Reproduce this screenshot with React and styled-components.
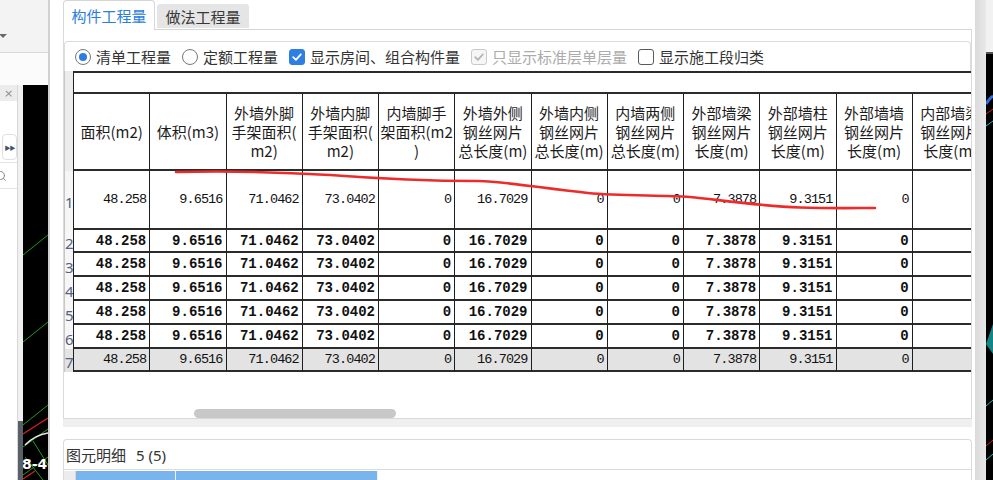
import React from 'react'
import styled, { createGlobalStyle } from 'styled-components'
import { Search } from 'lucide-react'

const GlobalStyle = createGlobalStyle`
  html, body { margin: 0; padding: 0; background: #f3f3f3; }
  body { font-family: "Noto Sans CJK SC", "Noto Sans", sans-serif; overflow: hidden; }
`

const COL_W = 76.25

const columns = [
  ['面积(m2)'],
  ['体积(m3)'],
  ['外墙外脚', '手架面积(', 'm2)'],
  ['外墙内脚', '手架面积(', 'm2)'],
  ['内墙脚手', '架面积(m2', ')'],
  ['外墙外侧', '钢丝网片', '总长度(m)'],
  ['外墙内侧', '钢丝网片', '总长度(m)'],
  ['内墙两侧', '钢丝网片', '总长度(m)'],
  ['外部墙梁', '钢丝网片', '长度(m)'],
  ['外部墙柱', '钢丝网片', '长度(m)'],
  ['外部墙墙', '钢丝网片', '长度(m)'],
  ['内部墙梁', '钢丝网片', '长度(m)'],
]

const values = ['48.258', '9.6516', '71.0462', '73.0402', '0', '16.7029', '0', '0', '7.3878', '9.3151', '0', '']

const rows = [
  { n: 1, h: 59, bold: false },
  { n: 2, h: 23, bold: true },
  { n: 3, h: 24, bold: true },
  { n: 4, h: 24, bold: true },
  { n: 5, h: 24, bold: true },
  { n: 6, h: 24, bold: true },
  { n: 7, h: 23, bold: false, shaded: true },
]

const Page = styled.div`
  position: relative;
  display: flex;
  width: 993px;
  height: 480px;
  overflow: hidden;
  background: #f3f3f3;
`

/* background application on the left */
const Backdrop = styled.div`
  width: 48px;
  flex: none;
  display: flex;
  flex-direction: column;
`
const TopStrip = styled.div`
  height: 53px;
  box-sizing: border-box;
  padding-top: 34px;
  background: #f3f3f3;
  border-bottom: 1px solid #d9d9d9;
`
const Caret = styled.div`
  width: 0;
  height: 0;
  margin-left: -1px;
  border-left: 4px solid transparent;
  border-right: 4px solid transparent;
  border-top: 4px solid #6a6a6a;
`
const TopGap = styled.div`
  height: 32px;
  background: #fbfbfb;
`
const Workspace = styled.div`
  flex: 1;
  display: flex;
  min-height: 0;
`
const SidePanel = styled.div`
  width: 18px;
  flex: none;
  box-sizing: border-box;
  border-right: 1px solid #d8d8d8;
  background: #fff;
  display: flex;
  flex-direction: column;
  overflow: hidden;
`
const PanelHead = styled.div`
  height: 16px;
  background: #ececec;
  display: flex;
  align-items: center;
  padding-left: 4px;
  font-family: "DejaVu Sans", sans-serif;
  font-size: 11px;
  color: #8c8c8c;
`
const MiniButton = styled.div`
  margin: 33px 0 0 2px;
  width: 15px;
  height: 26px;
  box-sizing: border-box;
  border: 1px solid #e0e0e0;
  border-radius: 4px;
  display: flex;
  align-items: center;
  justify-content: center;
  font-size: 6px;
  letter-spacing: -1px;
  color: #41506b;
`
const PanelRule = styled.div`
  margin-top: 2px;
  border-top: 1px solid #e4e4e4;
`
const SearchRow = styled.div`
  height: 25px;
  display: flex;
  align-items: center;
  margin-left: -5px;
  color: #8a8a8a;
  border-bottom: 1px solid #e4e4e4;
`
const Splitter = styled.div`
  width: 5px;
  flex: none;
  display: flex;
  flex-direction: column;
`
const SplitLight = styled.div`
  flex: 1;
  background: #f0f0f0;
`
const SplitDark = styled.div`
  height: 59px;
  background: #5a6068;
`
const Canvas = styled.div`
  flex: 1;
  background: #000;
  overflow: hidden;
  svg { display: block; }
`

/* dialog */
const Dialog = styled.div`
  width: 927px;
  flex: none;
  box-sizing: border-box;
  border-left: 2px solid #d2d2d2;
  background: #fff;
  padding: 0 3px 0 13px;
  display: flex;
  flex-direction: column;
`
const TabBar = styled.div`
  height: 31px;
  display: flex;
  align-items: flex-end;
`
const ActiveTab = styled.div`
  width: 92px;
  height: 30px;
  box-sizing: border-box;
  border: 1px solid #d6d6d6;
  border-bottom: none;
  border-radius: 4px 4px 0 0;
  display: flex;
  align-items: center;
  justify-content: center;
  font-size: 15px;
  color: #2b7ddb;
`
const TabRest = styled.div`
  flex: 1;
  align-self: stretch;
  display: flex;
  align-items: flex-end;
  padding-left: 2px;
  border-bottom: 1px solid #d6d6d6;
`
const Tab = styled.div`
  width: 92px;
  height: 24px;
  margin-bottom: 1px;
  border-radius: 3px 3px 0 0;
  background: #e5e5e5;
  display: flex;
  align-items: center;
  justify-content: center;
  font-size: 15px;
  color: #383838;
`
const ContentPanel = styled.div`
  height: 392px;
  box-sizing: border-box;
  border: 1px solid #d9d9d9;
  border-top: none;
  display: flex;
  flex-direction: column;
`
const OptionsBar = styled.div`
  margin-top: 11px;
  height: 30px;
  box-sizing: border-box;
  border: 1px solid #dcdcdc;
  border-bottom: none;
  border-radius: 4px 4px 0 0;
  display: flex;
  align-items: center;
  padding-left: 10px;
  font-size: 15px;
`
const Option = styled.div`
  display: flex;
  align-items: center;
  margin-right: 11px;
  color: ${p => (p.$disabled ? '#ababab' : '#333')};
  white-space: nowrap;
`
const Radio = styled.span`
  width: 16px;
  height: 16px;
  flex: none;
  box-sizing: border-box;
  border-radius: 50%;
  border: 1px solid #777;
  margin-right: 5px;
  display: flex;
  align-items: center;
  justify-content: center;
  &::after {
    content: '';
    width: 8px;
    height: 8px;
    border-radius: 50%;
    background: ${p => (p.$on ? '#2a7de1' : 'transparent')};
  }
`
const tone = {
  on: { border: '#2d7fe3', bg: '#2d7fe3', mark: '#fff' },
  dim: { border: '#c9c9c9', bg: '#f6f6f6', mark: '#b5b5b5' },
  off: { border: '#5a5a5a', bg: '#fff', mark: 'none' },
}
const CheckBox = styled.span`
  width: 16px;
  height: 16px;
  flex: none;
  box-sizing: border-box;
  border-radius: 3px;
  border: 1px solid ${p => tone[p.$tone].border};
  background: ${p => tone[p.$tone].bg};
  margin-right: 5px;
  display: flex;
  align-items: center;
  justify-content: center;
`

const GridViewport = styled.div`
  width: 907px;
  height: 301px;
  overflow: hidden;
`
const Row = styled.div`
  display: grid;
  grid-template-columns: 10px repeat(12, ${COL_W}px);
  height: ${p => p.$h}px;
`
const RowHead = styled.div`
  box-sizing: border-box;
  border-left: 1px solid #c6c6c6;
  border-right: 1px solid #222;
  background: ${p => (p.$shaded ? '#e3e3e3' : p.$head ? '#ececec' : '#f6f6f6')};
  display: flex;
  align-items: center;
  padding-top: 3px;
  overflow: hidden;
  font-family: "Noto Sans", sans-serif;
  font-size: 15px;
  color: #52627f;
`
const BandCell = styled.div`
  grid-column: 2 / -1;
  border-top: 2px solid #2b2b2b;
  border-bottom: 2px solid #2b2b2b;
  background: #fff;
`
const HeadCell = styled.div`
  box-sizing: border-box;
  border-right: 1px solid #1e1e1e;
  border-bottom: 2px solid #2b2b2b;
  display: flex;
  flex-direction: column;
  align-items: center;
  justify-content: center;
  font-size: 15px;
  line-height: 19px;
  color: #1c1c1c;
  white-space: nowrap;
  overflow: hidden;
`
const DataCell = styled.div`
  box-sizing: border-box;
  border-right: 1px solid #1e1e1e;
  border-bottom: 2px solid #2b2b2b;
  background: ${p => (p.$shaded ? '#e3e3e3' : '#fff')};
  display: flex;
  align-items: center;
  justify-content: flex-end;
  padding-right: 3px;
  font-family: "Liberation Mono", "DejaVu Sans Mono", monospace;
  font-size: ${p => (p.$bold ? '14px' : '13.5px')};
  font-weight: ${p => (p.$bold ? 700 : 400)};
  letter-spacing: ${p => (p.$bold ? '0px' : '-0.9px')};
  color: #111;
  white-space: nowrap;
  overflow: hidden;
`
const ScrollArea = styled.div`
  flex: 1;
`
const ScrollThumb = styled.div`
  margin: 37px 0 0 130px;
  width: 202px;
  height: 9px;
  border-radius: 5px;
  background: #c8c8c8;
`
const Band = styled.div`
  height: 8px;
  flex: none;
  background: #efefef;
`
const DetailPanel = styled.div`
  margin-top: 12px;
  flex: 1;
  border: 1px solid #dadada;
  border-bottom: none;
  border-radius: 4px 4px 0 0;
`
const DetailHead = styled.div`
  height: 29px;
  border-bottom: 1px solid #dcdcdc;
  display: flex;
  align-items: center;
  padding-left: 2px;
  font-size: 15px;
  color: #333;
`
const Count = styled.span`
  margin-left: 10px;
  font-family: "Noto Sans", sans-serif;
`
const DetailColumns = styled.div`
  margin-top: 1px;
  display: grid;
  grid-template-columns: 12px 100px 202px;
  height: 10px;
`
const DetailCell = styled.div`
  background: ${p => (p.$blue ? '#7ab4ec' : '#ececec')};
  border-right: 1px solid ${p => (p.$blue ? '#e8f2fc' : '#d8d8d8')};
`

/* right edge */
const RightEdge = styled.div`
  flex: 1;
  display: flex;
`
const FrameShade = styled.div`
  width: 11px;
  background: linear-gradient(to right, #dadada, #e8e8e8);
`
const RightApp = styled.div`
  flex: 1;
  display: flex;
  flex-direction: column;
`
const RightTop = styled.div`
  height: 52px;
  background: #f2f2f2;
  border-bottom: 2px solid #555;
`
const RightCanvas = styled.div`
  flex: 1;
  background: #000;
  overflow: hidden;
  svg { display: block; }
`
const Annotation = styled.svg`
  position: absolute;
  left: 0;
  top: 0;
  pointer-events: none;
`

const Mark = ({ color }) => (
  <svg width="12" height="12" viewBox="0 0 12 12">
    <path d="M2.2 6.2 L4.9 8.8 L9.8 3.3" fill="none" stroke={color} strokeWidth="1.8" strokeLinecap="round" strokeLinejoin="round" />
  </svg>
)

const Check = ({ t, children }) => (
  <Option $disabled={t === 'dim'}>
    <CheckBox $tone={t}>{t !== 'off' && <Mark color={tone[t].mark} />}</CheckBox>
    {children}
  </Option>
)

export default function App() {
  return (
    <Page>
      <GlobalStyle />
      <Backdrop>
        <TopStrip><Caret /></TopStrip>
        <TopGap />
        <Workspace>
          <SidePanel>
            <PanelHead>×</PanelHead>
            <MiniButton>▶▶</MiniButton>
            <PanelRule />
            <SearchRow><Search size={12} strokeWidth={2} /></SearchRow>
          </SidePanel>
          <Splitter><SplitLight /><SplitDark /></Splitter>
          <Canvas>
            <svg width="25" height="395" viewBox="0 0 25 395">
              <g stroke="#1f9a1f" strokeWidth="1" fill="none">
                <path d="M0 170 L25 150" />
                <path d="M0 257 L25 237" />
                <path d="M0 340 L25 320" />
                <path d="M0 362 L25 344" />
                <path d="M2 372 L20 395" />
                <path d="M0 390 L25 372" />
                <path d="M10 356 L25 380" />
              </g>
              <g stroke="#d42020" strokeWidth="1.2" fill="none">
                <path d="M0 349 L25 333" />
                <path d="M0 394 L12 386" />
              </g>
              <path d="M2 360 Q12 350 25 348" stroke="#e8e8e8" strokeWidth="1.5" fill="none" />
              <text x="-1" y="384" fill="#fff" fontFamily="DejaVu Sans" fontWeight="700" fontSize="14">8-4</text>
            </svg>
          </Canvas>
        </Workspace>
      </Backdrop>

      <Dialog>
        <TabBar>
          <ActiveTab>构件工程量</ActiveTab>
          <TabRest><Tab>做法工程量</Tab></TabRest>
        </TabBar>
        <ContentPanel>
          <OptionsBar>
            <Option><Radio $on />清单工程量</Option>
            <Option><Radio />定额工程量</Option>
            <Check t="on">显示房间、组合构件量</Check>
            <Check t="dim">只显示标准层单层量</Check>
            <Check t="off">显示施工段归类</Check>
          </OptionsBar>
          <GridViewport>
            <Row $h={23}>
              <RowHead $head />
              <BandCell />
            </Row>
            <Row $h={77}>
              <RowHead $head />
              {columns.map((lines, i) => (
                <HeadCell key={i}>
                  {lines.map(l => <span key={l}>{l}</span>)}
                </HeadCell>
              ))}
            </Row>
            {rows.map(r => (
              <Row key={r.n} $h={r.h}>
                <RowHead $shaded={r.shaded}>{r.n}</RowHead>
                {values.map((v, i) => (
                  <DataCell key={i} $bold={r.bold} $shaded={r.shaded}>{v}</DataCell>
                ))}
              </Row>
            ))}
          </GridViewport>
          <ScrollArea><ScrollThumb /></ScrollArea>
        </ContentPanel>
        <Band />
        <DetailPanel>
          <DetailHead>图元明细<Count>5 (5)</Count></DetailHead>
          <DetailColumns>
            <DetailCell />
            <DetailCell $blue />
            <DetailCell $blue />
          </DetailColumns>
        </DetailPanel>
      </Dialog>

      <RightEdge>
        <FrameShade />
        <RightApp>
          <RightTop />
          <RightCanvas>
            <svg width="7" height="426" viewBox="0 0 7 426">
              <path d="M0 50 Q4 44 7 42" stroke="#2f6fe0" strokeWidth="3" fill="none" />
              <path d="M0 60 L7 55" stroke="#d42020" strokeWidth="1" />
              <path d="M0 72 L7 67" stroke="#19b8c8" strokeWidth="1" />
              <path d="M0 290 L7 270 L7 300 Z" fill="#138585" />
              <path d="M0 352 L7 346" stroke="#19b8c8" strokeWidth="1" />
              <path d="M0 392 L7 386" stroke="#d42020" strokeWidth="1" />
              <path d="M0 406 L7 400" stroke="#19b8c8" strokeWidth="1" />
            </svg>
          </RightCanvas>
        </RightApp>
      </RightEdge>

      <Annotation width="993" height="480" viewBox="0 0 993 480">
        <path
          d="M176 172 C220 171 280 172 330 175 C370 178 420 181 478 181 C510 182 540 188 588 193 C620 196 660 195 690 197 C720 200 760 206 800 207.5 C830 208.5 855 208 875 208"
          fill="none"
          stroke="#ee2a2a"
          strokeWidth="2.6"
          strokeLinecap="round"
        />
      </Annotation>
    </Page>
  )
}
